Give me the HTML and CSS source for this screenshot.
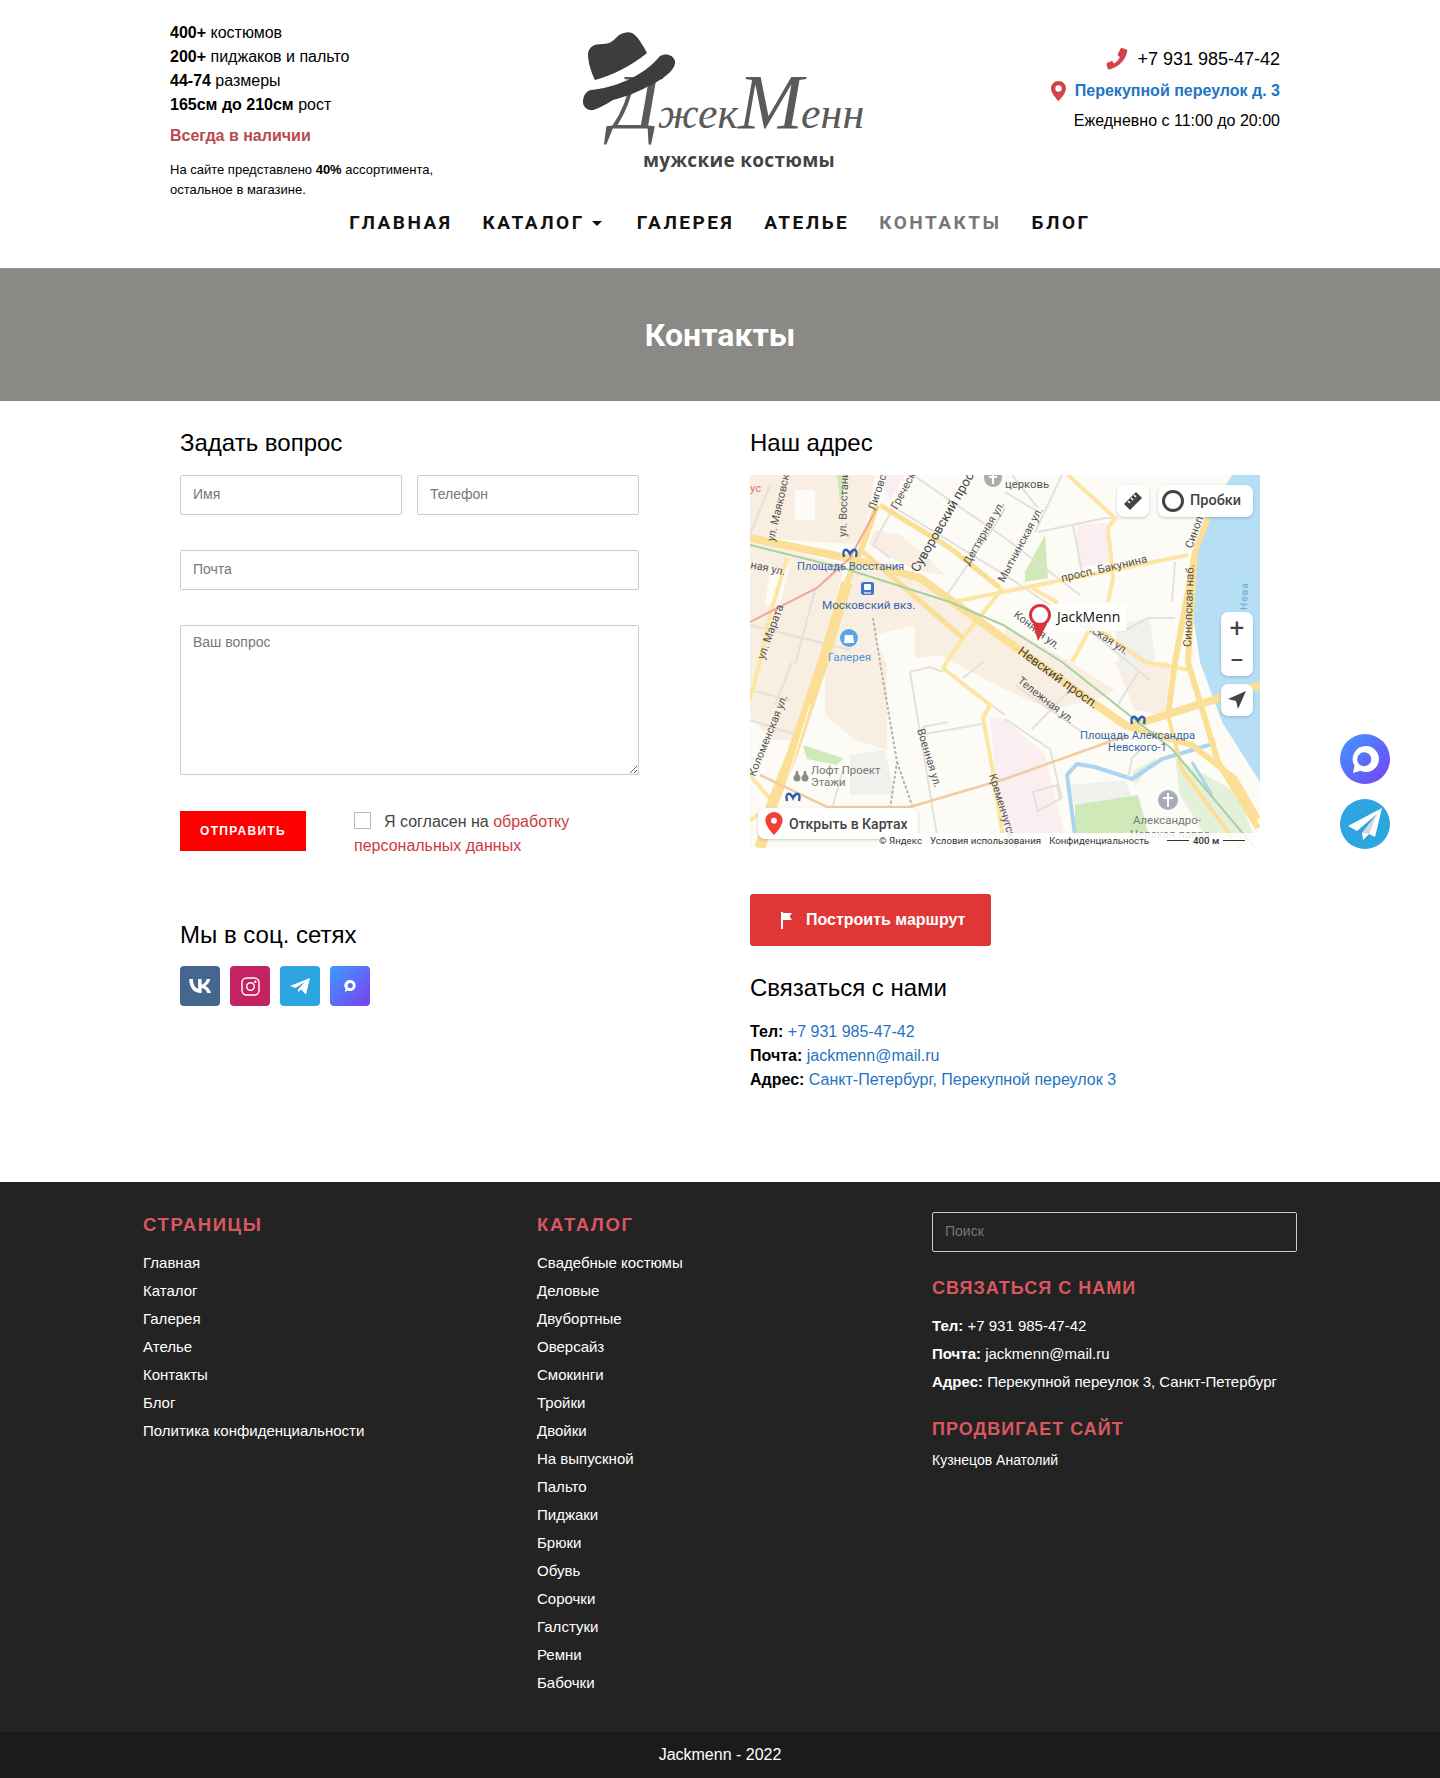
FILE: index.html
```html
<!DOCTYPE html>
<html lang="ru">
<head>
    <meta charset="UTF-8">
    <meta name="viewport" content="width=device-width, initial-scale=1.0">
    <title>Контакты - ДжекМенн</title>
    <link rel="stylesheet" href="styles.css">
</head>

<body>
    <header class="site-header">
        <div class="header-top">
            <div class="header-info">
                <p><b>400+</b> костюмов</p>
                <p><b>200+</b> пиджаков и пальто</p>
                <p><b>44-74</b> размеры</p>
                <p><b>165см до 210см</b> рост</p>
                <p class="in-stock">Всегда в наличии</p>
                <p class="info-small">На сайте представлено <b>40%</b> ассортимента,<br>остальное в магазине.</p>
            </div>

            <a class="logo" href="#">
                <svg class="logo-hat" viewBox="0 0 93 79" aria-hidden="true">
                    <path d="M5 22C6 15 10 12 20 12C26 12 30 9 33 6C37 1 44-1 49 1C55 4 60 14 64 21C48 34 30 43 12 48C8 40 5 30 5 22Z" fill="#3d3d3d"/>
                    <path d="M77 24C82 21 90 22 92 29C93 36 85 44 70 52C55 60 42 65 30 68C20 74 12 79 7 78C2 77 0 73 0 70C0 64 3 59 8 58C30 56 60 45 77 24Z" fill="#3d3d3d"/>
                </svg>
                <span class="logo-name"><span class="logo-cap">Д</span>жек<span class="logo-cap">М</span>енн</span>
                <span class="logo-sub">мужские костюмы</span>
            </a>

            <div class="header-contacts">
                <p class="contact-phone">
                    <svg class="icon-red" width="22" height="22" viewBox="0 0 22 22" aria-hidden="true"><path d="M16 0l4.500 1.500c.8.300 1 1 .8 1.800C19.500 12 13 19 3.500 21.500c-.8.200-1.500-.2-1.800-1L.5 16.500c-.2-.7 0-1.200.6-1.500l4-1.800c.6-.2 1.100-.1 1.500.4l1.500 1.900c2.500-1.500 4.500-3.700 5.800-6.300l-1.800-1.700c-.4-.4-.5-.9-.3-1.400L14.500.8c.3-.7.800-1 1.500-.8z"/></svg>
                    +7 931 985-47-42
                </p>
                <p class="contact-address">
                    <svg class="icon-red" width="15" height="20" viewBox="0 0 15 20" aria-hidden="true"><path fill-rule="evenodd" d="M7.500 0C3.400 0 0 3.300 0 7.400 0 11.500 5 17.500 7.500 20 10 17.500 15 11.500 15 7.400 15 3.300 11.600 0 7.500 0zm0 4.300a3.200 3.200 0 1 1 0 6.400 3.200 3.200 0 0 1 0-6.400z"/></svg>
                    <a href="#">Перекупной переулок д. 3</a>
                </p>
                <p class="contact-hours">Ежедневно с 11:00 до 20:00</p>
            </div>
        </div>

        <nav class="main-nav">
            <a href="#">Главная</a>
            <a href="#" class="has-caret">Каталог</a>
            <a href="#">Галерея</a>
            <a href="#">Ателье</a>
            <a href="#" class="active">Контакты</a>
            <a href="#">Блог</a>
        </nav>
    </header>

    <section class="page-title">
        <h1>Контакты</h1>
    </section>

    <main class="contacts">
        <div class="contacts-left">
            <h2>Задать вопрос</h2>
            <form class="ask-form">
                <div class="form-row">
                    <input type="text" placeholder="Имя">
                    <input type="text" placeholder="Телефон">
                </div>
                <input type="text" placeholder="Почта">
                <textarea placeholder="Ваш вопрос"></textarea>
                <div class="form-send">
                    <button type="button" class="send-btn">Отправить</button>
                    <label class="agree"><span class="agree-box"></span>Я согласен на <a href="#">обработку персональных данных</a></label>
                </div>
            </form>

            <h2 class="social-title">Мы в соц. сетях</h2>
            <div class="social">
                <a class="social-vk" href="#" aria-label="VK">
                    <svg width="22" height="14" viewBox="0 0 22 14"><path fill="#fff" d="M12 14C4.600 14 .4 8.800.2 0h3.700c.1 6.500 3 9.200 5.200 9.800V0h3.500v5.600c2.100-.2 4.400-2.800 5.100-5.600h3.500c-.6 3.500-3.100 6-4.900 7 1.800.8 4.700 3 5.800 7h-3.800c-.9-2.700-3-4.700-5.700-5V14z"/></svg>
                </a>
                <a class="social-ig" href="#" aria-label="Instagram">
                    <svg width="19" height="19" viewBox="0 0 20 20" fill="none" stroke="#fff" stroke-width="1.500"><rect x="1" y="1" width="18" height="18" rx="5"/><circle cx="10" cy="10" r="4"/><circle cx="15" cy="5" r=".6" fill="#fff"/></svg>
                </a>
                <a class="social-tg" href="#" aria-label="Telegram">
                    <svg width="20" height="17" viewBox="0 0 20 17"><path fill="#fff" d="M20 0L0 8l5.500 2L15 4l-7 7.500V14l3-2.500 5 5z"/></svg>
                </a>
                <a class="social-chat" href="#" aria-label="Чат">
                    <svg width="12" height="12" viewBox="0 0 12 12"><path fill="#fff" fill-rule="evenodd" d="M6.200 0a5.500 5.500 0 1 1-2.400 10.500L1 12l.6-3A5.500 5.500 0 0 1 6.200 0zm0 3a2.600 2.600 0 1 0 0 5.200 2.600 2.600 0 0 0 0-5.200z"/></svg>
                </a>
            </div>
        </div>

        <div class="contacts-right">
            <h2>Наш адрес</h2>
            <div class="map">
                <svg class="map-canvas" viewBox="0 0 510 373" aria-label="Карта">
                    <rect width="510" height="373" fill="#fcfbf6"/>
                    <!-- районы -->
                    <g fill="#f8eee2">
                        <path d="M0 0H125L112 70 0 62Z"/>
                        <path d="M118 70L165 95 195 100 175 80 150 60 125 55Z"/>
                        <path d="M0 65L95 90 45 265 20 265 0 240Z"/>
                        <path d="M100 90L170 105 255 165 340 225 300 235 250 212 190 180 137 187 137 275 105 265 75 240 75 187Z"/>
                        <path d="M255 150L320 187 365 215 345 225 255 165Z"/>
                        <path d="M365 187H420L415 240 385 235Z"/>
                    </g>
                    <g fill="#fcfbf6">
                        <path d="M45 15H65L65 45H45Z"/>
                        <path d="M125 160L165 150V187H135Z"/>
                        <path d="M20 95L40 90 30 130 15 130Z"/>
                    </g>
                    <g fill="#fbeef0">
                        <path d="M327 50L357 48 360 87 328 93Z"/>
                        <path d="M255 244L295 280 315 363 255 363 245 300 240 243Z"/>
                        <path d="M135 0H155L140 25 135 15Z"/>
                    </g>
                    <g fill="#f0f0ed">
                        <path d="M100 280L135 275 145 320 100 320Z"/>
                        <path d="M365 150L400 143 405 185 370 200Z"/>
                        <path d="M320 310L375 305 385 330 325 335Z"/>
                    </g>
                    <g fill="#cfe9b9">
                        <path d="M295 60L275 97V107L298 103Z"/>
                        <path d="M87 0H98L90 27Z"/>
                        <path d="M53 270L93 283 87 290 57 284Z"/>
                        <path d="M325 330L388 320 398 357 325 360Z"/>
                    </g>
                    <g fill="#e3f1d8">
                        <path d="M382 297L408 282 385 310Z"/>
                        <path d="M425 283L488 318 505 365 455 360 430 320Z"/>
                    </g>
                    <!-- вода -->
                    <path d="M482 0L455 43 445 83 442 133 450 187 472 247 510 307V0Z" fill="#b6def5"/>
                    <g fill="none" stroke="#a9d5f2">
                        <path d="M462 269L412 284 382 304 345 292 327 289 317 300 325 360" stroke-width="4"/>
                        <path d="M442 287L462 320" stroke-width="3"/>
                    </g>
                    <!-- мелкие улицы -->
                    <g fill="none" stroke="#e2e1dc" stroke-width="2">
                        <path d="M163 0L255 63 330 120"/>
                        <path d="M145 33L255 100 345 160 400 205"/>
                        <path d="M197 120L247 47 255 33"/>
                        <path d="M123 70L143 33"/>
                        <path d="M123 70L140 83"/>
                        <path d="M288 57L355 43H368"/>
                        <path d="M285 57L312 0"/>
                        <path d="M323 50L332 97"/>
                        <path d="M255 17L288 37"/>
                        <path d="M262 0L288 33"/>
                        <path d="M425 87L422 127"/>
                        <path d="M372 157L398 143H425"/>
                        <path d="M160 197L180 192 193 197"/>
                        <path d="M160 197L187 360"/>
                        <path d="M173 252L198 247"/>
                        <path d="M175 259L232 249"/>
                        <path d="M0 245L43 259"/>
                        <path d="M42 187L25 230"/>
                        <path d="M213 203L233 187"/>
                        <path d="M240 229L255 240"/>
                        <path d="M83 330L93 295"/>
                        <path d="M255 244L300 274 312 324"/>
                        <path d="M283 317L307 310 310 324 288 336Z"/>
                        <path d="M265 210L332 257"/>
                        <path d="M282 254L325 210"/>
                        <path d="M368 230L388 197"/>
                        <path d="M378 303L382 283 392 273"/>
                        <path d="M0 150L60 165 100 175"/>
                        <path d="M65 115L45 190"/>
                        <path d="M20 10L0 60"/>
                        <path d="M0 215L40 225"/>
                    </g>
                    <g fill="none" stroke="#b3b3af" stroke-width="2" stroke-dasharray="3 2">
                        <path d="M123 143L130 187 147 287 140 333"/>
                        <path d="M147 287L163 333"/>
                    </g>
                    <!-- дороги -->
                    <g fill="none" stroke="#fde6a3" stroke-width="4" stroke-linejoin="round">
                        <path d="M203 127L438 80"/>
                        <path d="M253 113L213 163 193 193 240 230 233 243 243 297 253 363"/>
                        <path d="M282 113L308 128"/>
                        <path d="M338 147L395 187 440 195"/>
                        <path d="M318 0L365 43 358 53 363 103 358 127"/>
                        <path d="M342 150L322 187"/>
                        <path d="M37 83L20 140 10 187 0 225"/>
                        <path d="M0 300L25 330 0 345"/>
                    </g>
                    <g fill="none" stroke="#fcdf97" stroke-linejoin="round">
                        <path d="M0 63L97 83 170 103 253 163 342 227 378 252" stroke-width="8"/>
                        <path d="M130 30L200 73 250 113" stroke-width="5"/>
                        <path d="M113 77L213 163" stroke-width="5"/>
                        <path d="M127 30L113 70 97 107" stroke-width="6"/>
                        <path d="M97 107L73 187 43 277 23 327 10 373" stroke-width="11"/>
                        <path d="M458 43L445 77 425 187 418 240" stroke-width="6"/>
                        <path d="M445 77L438 187 468 287 508 353" stroke-width="6"/>
                        <path d="M378 252L510 210" stroke-width="8"/>
                        <path d="M378 252L442 270 485 304 508 344" stroke-width="6"/>
                        <path d="M418 240L432 295 490 373" stroke-width="4"/>
                    </g>
                    <path d="M60 230L30 330" fill="none" stroke="#fff" stroke-width="1"/>
                    <path d="M0 70L93 93 200 127 253 150 312 187 422 274 505 373" fill="none" stroke="#a8d0a0" stroke-width="2"/>
                    <path d="M0 147L67 113 100 83 127 33" fill="none" stroke="#f0a995" stroke-width="2"/>
                    <path d="M10 300L77 332 160 332 255 304 378 260" fill="none" stroke="#f3cba0" stroke-width="2.500"/>
                    <!-- подписи -->
                    <g class="map-street">
                        <text transform="translate(24 67) rotate(-77)">ул. Маяковского</text>
                        <text transform="translate(96 62) rotate(-88)">ул. Восстания</text>
                        <text transform="translate(125 36) rotate(-72)">Лиговский</text>
                        <text transform="translate(147 35) rotate(-62)">Греческий</text>
                        <text transform="translate(168 98) rotate(-60)" class="map-street-lg">Суворовский просп.</text>
                        <text transform="translate(219 91) rotate(-60)">Дегтярная ул.</text>
                        <text transform="translate(254 108) rotate(-62)">Мытнинская ул.</text>
                        <text transform="translate(312 107) rotate(-13)" class="map-street-md">просп. Бакунина</text>
                        <text transform="translate(441 172) rotate(-88)" class="map-street-md">Синопская наб.</text>
                        <text transform="translate(442 74) rotate(-70)" class="map-street-md">Синоп</text>
                        <text transform="translate(14 185) rotate(-70)" class="map-street-md">ул. Марата</text>
                        <text transform="translate(5 302) rotate(-68)">Коломенская ул.</text>
                        <text transform="translate(263 141) rotate(38)">Конная ул.</text>
                        <text transform="translate(325 147) rotate(33)">Конская ул.</text>
                        <text transform="translate(267 178) rotate(36)" class="map-street-lg">Невский просп.</text>
                        <text transform="translate(267 207) rotate(38)">Тележная ул.</text>
                        <text transform="translate(167 255) rotate(73)">Военная ул.</text>
                        <text transform="translate(239 300) rotate(73)">Кременчугская</text>
                        <text transform="translate(0 93) rotate(12)">ная ул.</text>
                        <text x="255" y="13" class="map-street-md">церковь</text>
                        <text transform="translate(497 135) rotate(-88)" class="map-river">Нева</text>
                    </g>
                    <text x="0" y="17" class="map-cut">ус</text>
                    <g class="map-metro">
                        <text x="47" y="95">Площадь Восстания</text>
                        <text x="72" y="134" class="map-metro-lg">Московский вкз.</text>
                        <text x="330" y="264">Площадь Александра</text>
                        <text x="358" y="276">Невского-1</text>
                    </g>
                    <g fill="none" stroke="#2a5fb0" stroke-width="2.400">
                        <path d="M94 82C92 73 97 73 100 79C103 73 108 73 106 82"/>
                        <path d="M382 249C380 240 385 240 388 246C391 240 396 240 394 249"/>
                        <path d="M37 326C35 317 40 317 43 323C46 317 51 317 49 326"/>
                    </g>
                    <rect x="111" y="107" width="13" height="13" rx="2.500" fill="#3b76cc"/>
                    <rect x="114" y="109" width="7" height="6" rx="1" fill="#fff"/>
                    <path d="M114 118h7" stroke="#fff" stroke-width="1.200"/>
                    <circle cx="99" cy="163" r="9" fill="#5aa5ea"/>
                    <path d="M95 160H103L104 168H94Z" fill="#fff"/>
                    <text x="78" y="186" class="map-shop">Галерея</text>
                    <circle cx="243" cy="3" r="9" fill="#a9acb2"/>
                    <path d="M243 -3v12M239 2h8" stroke="#fff" stroke-width="2"/>
                    <circle cx="418" cy="325" r="10" fill="#a9acb2"/>
                    <path d="M418 318v14M413 323h10" stroke="#fff" stroke-width="2"/>
                    <text x="383" y="349" class="map-place">Александро-</text>
                    <text x="380" y="363" class="map-place">Невская лавра</text>
                    <g fill="#8a8a8a">
                        <circle cx="47" cy="303" r="3.500"/>
                        <circle cx="55" cy="303" r="3.500"/>
                        <path d="M46 296h2l1 6h-4zM54 296h2l1 6h-4z"/>
                    </g>
                    <text x="61" y="299" class="map-place">Лофт Проект</text>
                    <text x="61" y="311" class="map-place">Этажи</text>
                    <!-- метка -->
                    <rect x="298" y="130" width="78" height="26" fill="#fff" opacity=".9"/>
                    <circle cx="290" cy="140" r="9.500" fill="#fff" stroke="#d8343b" stroke-width="3"/>
                    <path d="M283 149H297L288 166Z" fill="#d8343b"/>
                    <text x="307" y="147" class="map-pin-label">JackMenn</text>
                </svg>

                <div class="map-ruler"><svg width="22" height="22" viewBox="0 0 22 22"><path d="M2 14L14 2l6 6L8 20Z" fill="#444"/><path d="M6 11l2 2M9 8l2 2M12 5l2 2" stroke="#fff" stroke-width="1.500"/></svg></div>
                <div class="map-traffic"><span class="traffic-ring"></span>Пробки</div>
                <div class="map-zoom"><span>+</span><span>−</span></div>
                <div class="map-locate"><svg width="20" height="20" viewBox="0 0 20 20"><path d="M19 1L1 9l8 2 2 8Z" fill="#444"/></svg></div>
                <div class="map-open">
                    <svg width="18" height="23" viewBox="0 0 15 20"><path fill-rule="evenodd" fill="#f43f37" d="M7.500 0C3.400 0 0 3.300 0 7.400 0 11.500 5 17.500 7.500 20 10 17.500 15 11.500 15 7.400 15 3.300 11.600 0 7.500 0zm0 5a2.500 2.500 0 1 1 0 5 2.500 2.500 0 0 1 0-5z"/></svg>
                    Открыть в Картах
                </div>
                <div class="map-copy"><span>© Яндекс</span><span>Условия использования</span><span>Конфиденциальность</span><span class="map-scale">400 м</span></div>
            </div>

            <a class="route-btn" href="#">
                <svg width="13" height="17" viewBox="0 0 13 17"><path fill="#fff" d="M1 0h2v17H1zM3 1h9L9.500 4.500 12 8H3z"/></svg>
                Построить маршрут
            </a>

            <h2 class="contact-title">Связаться с нами</h2>
            <ul class="contact-list">
                <li><b>Тел:</b> <a href="#">+7 931 985-47-42</a></li>
                <li><b>Почта:</b> <a href="#">jackmenn@mail.ru</a></li>
                <li><b>Адрес:</b> <a href="#">Санкт-Петербург, Перекупной переулок 3</a></li>
            </ul>
        </div>
    </main>

    <aside class="float-buttons">
        <a class="float-chat" href="#" aria-label="Чат">
            <svg width="30" height="30" viewBox="0 0 30 30"><path fill="#fff" fill-rule="evenodd" d="M16 2a13 13 0 1 1-5.500 24.800L3 29l1.500-7.500A13 13 0 0 1 16 2zm0 6.500a7 7 0 1 0 0 13.500 7 7 0 0 0 0-13.500z"/></svg>
        </a>
        <a class="float-tg" href="#" aria-label="Telegram">
            <svg width="34" height="32" viewBox="0 0 34 32"><path fill="#fff" d="M34 0L0 18l9 5L29 6 14 25l1 7 6-6 6 3z"/><path fill="#d8d8d8" d="M29 6L14 25l7 1z"/></svg>
        </a>
    </aside>

    <footer class="site-footer">
        <div class="footer-columns">
            <div class="footer-col">
                <h3>Страницы</h3>
                <ul>
                    <li><a href="#">Главная</a></li>
                    <li><a href="#">Каталог</a></li>
                    <li><a href="#">Галерея</a></li>
                    <li><a href="#">Ателье</a></li>
                    <li><a href="#">Контакты</a></li>
                    <li><a href="#">Блог</a></li>
                    <li><a href="#">Политика конфиденциальности</a></li>
                </ul>
            </div>
            <div class="footer-col">
                <h3>Каталог</h3>
                <ul>
                    <li><a href="#">Свадебные костюмы</a></li>
                    <li><a href="#">Деловые</a></li>
                    <li><a href="#">Двубортные</a></li>
                    <li><a href="#">Оверсайз</a></li>
                    <li><a href="#">Смокинги</a></li>
                    <li><a href="#">Тройки</a></li>
                    <li><a href="#">Двойки</a></li>
                    <li><a href="#">На выпускной</a></li>
                    <li><a href="#">Пальто</a></li>
                    <li><a href="#">Пиджаки</a></li>
                    <li><a href="#">Брюки</a></li>
                    <li><a href="#">Обувь</a></li>
                    <li><a href="#">Сорочки</a></li>
                    <li><a href="#">Галстуки</a></li>
                    <li><a href="#">Ремни</a></li>
                    <li><a href="#">Бабочки</a></li>
                </ul>
            </div>
            <div class="footer-col footer-col-last">
                <input class="footer-search" type="text" placeholder="Поиск">
                <h3>Связаться с нами</h3>
                <ul>
                    <li><b>Тел:</b> +7 931 985-47-42</li>
                    <li><b>Почта:</b> jackmenn@mail.ru</li>
                    <li><b>Адрес:</b> Перекупной переулок 3, Санкт-Петербург</li>
                </ul>
                <h3 class="promo-title">Продвигает сайт</h3>
                <p class="promo-name">Кузнецов Анатолий</p>
            </div>
        </div>
        <div class="footer-bottom">Jackmenn - 2022</div>
    </footer>
</body>
</html>
```

FILE: styles.css
```css
* {
    box-sizing: border-box;
}

body {
    margin: 0;
    font-family: "Liberation Sans", Arial, sans-serif;
    font-size: 16px;
    line-height: 24px;
    color: #000;
    background-color: #fff;
}

a {
    text-decoration: none;
    color: #1f74c4;
}

p {
    margin: 0;
}

h2 {
    margin: 0;
    font-size: 24px;
    line-height: 36px;
    font-weight: 400;
}

/* Header */
.site-header {
    height: 269px;
    border-bottom: 1px solid #999;
}

.header-top {
    width: 1110px;
    margin-left: 170px;
    height: 211px;
    display: flex;
    justify-content: space-between;
}

.header-info {
    width: 290px;
    padding-top: 21px;
}

.in-stock {
    margin-top: 7px;
    font-weight: bold;
    color: #b94a4e;
}

.info-small {
    margin-top: 12px;
    font-size: 13px;
    line-height: 20px;
}

.logo {
    position: relative;
    width: 290px;
    height: 150px;
    margin-top: 32px;
    margin-left: 16px;
    color: #444;
    display: block;
}

.logo-hat {
    position: absolute;
    left: 0;
    top: 0;
    width: 93px;
    height: 79px;
    z-index: 1;
}

.logo-name {
    position: absolute;
    left: 27px;
    top: 26px;
    color: #5a5a5a;
    font-family: "Liberation Serif", serif;
    font-style: italic;
    font-size: 44px;
    line-height: 88px;
    white-space: nowrap;
}

.logo-cap {
    font-size: 78px;
    letter-spacing: -2px;
}

.logo-sub {
    position: absolute;
    left: 60px;
    top: 116px;
    font-family: "Open Sans", sans-serif;
    font-weight: 700;
    font-size: 19px;
    line-height: 24px;
    letter-spacing: .3px;
    white-space: nowrap;
}

.header-contacts {
    width: 300px;
    padding-top: 44px;
    text-align: right;
}

.header-contacts p {
    display: flex;
    justify-content: flex-end;
    align-items: center;
}

.icon-red {
    fill: #d2444a;
}

.contact-phone {
    font-size: 18px;
    line-height: 30px;
    gap: 9px;
}

.contact-address {
    margin-top: 2px;
    font-weight: bold;
    line-height: 30px;
    gap: 9px;
}

.contact-hours {
    line-height: 30px;
}

.main-nav {
    display: flex;
    justify-content: center;
    gap: 30px;
    font-family: Roboto, sans-serif;
    font-weight: 700;
    font-size: 19px;
    line-height: 24px;
    letter-spacing: 2.500px;
    text-transform: uppercase;
}

.main-nav a {
    color: #111;
}

.main-nav a.active {
    color: #777;
}

.has-caret::after {
    content: "";
    display: inline-block;
    margin-left: 7px;
    margin-right: 5px;
    vertical-align: 3px;
    border-top: 5px solid #111;
    border-left: 5px solid transparent;
    border-right: 5px solid transparent;
}

/* Title band */
.page-title {
    height: 132px;
    background-color: #8a8985;
    display: flex;
    align-items: center;
    justify-content: center;
}

.page-title h1 {
    margin: 0;
    color: #fff;
    font-family: Roboto, sans-serif;
    font-size: 32px;
    font-weight: 700;
}

/* Contacts */
.contacts {
    width: 1080px;
    height: 781px;
    margin: 0 auto;
    padding-top: 24px;
    display: grid;
    grid-template-columns: 459px 510px;
    justify-content: space-between;
    align-items: start;
}

.ask-form {
    margin-top: 14px;
    display: flex;
    flex-direction: column;
    gap: 35px;
}

.form-row {
    display: flex;
    gap: 15px;
}

.ask-form input,
.ask-form textarea {
    width: 100%;
    height: 40px;
    padding: 0 12px 2px;
    border: 1px solid #ccc;
    border-radius: 2px;
    font-family: inherit;
    font-size: 14px;
    outline: none;
}

.ask-form textarea {
    height: 150px;
    padding-top: 8px;
}

::placeholder {
    color: #777;
    opacity: 1;
}

.form-send {
    display: flex;
    margin-top: 1px;
}

.send-btn {
    width: 126px;
    height: 40px;
    flex: none;
    margin-right: 48px;
    border: none;
    background-color: #f00;
    color: #fff;
    font-family: inherit;
    font-size: 12px;
    font-weight: bold;
    letter-spacing: 1.300px;
    text-transform: uppercase;
}

.agree {
    margin-top: -1px;
    font-size: 16px;
    line-height: 24px;
    color: #444;
}

.agree a {
    color: #cf3a40;
}

.agree-box {
    display: inline-block;
    width: 17px;
    height: 17px;
    margin-right: 13px;
    vertical-align: -2px;
    border: 1px solid #bbb;
}

.social-title {
    margin-top: 59px;
}

.social {
    margin-top: 13px;
    display: flex;
    gap: 10px;
}

.social a {
    width: 40px;
    height: 40px;
    border-radius: 4px;
    display: flex;
    align-items: center;
    justify-content: center;
}

.social-vk {
    background-color: #45668e;
}

.social-ig {
    background-color: #c32361;
}

.social-tg {
    background-color: #2ca5e0;
}

.social-chat {
    background: linear-gradient(135deg, #3d9bff, #7a3ff2);
}

/* Map */
.map {
    position: relative;
    width: 510px;
    height: 373px;
    margin-top: 14px;
    overflow: hidden;
    font-family: Roboto, sans-serif;
}

.map-canvas {
    display: block;
    font-family: Roboto, sans-serif;
}

.map-street text {
    font-size: 11px;
    fill: #555;
}

.map-street .map-street-md {
    font-size: 11.300px;
}

.map-street .map-street-lg {
    font-size: 13px;
    fill: #444;
}

.map-street .map-river {
    font-size: 10px;
    letter-spacing: 1px;
    fill: #6fa8cc;
}

.map-cut {
    font-size: 11px;
    fill: #d77;
}

.map-metro text {
    font-size: 11.200px;
    fill: #3a64a8;
}

.map-metro .map-metro-lg {
    font-size: 11.700px;
}

.map-shop {
    font-size: 11.500px;
    fill: #4a94dd;
}

.map-place {
    font-size: 11.400px;
    fill: #777;
}

.map-pin-label {
    font-family: "Open Sans", sans-serif;
    font-size: 14px;
    fill: #111;
}

.map-ruler,
.map-traffic,
.map-zoom,
.map-locate,
.map-open {
    position: absolute;
    background-color: #fff;
    border-radius: 7px;
    box-shadow: 0 1px 3px rgba(0, 0, 0, .2);
    color: #444;
}

.map-ruler {
    left: 367px;
    top: 10px;
    width: 32px;
    height: 32px;
    display: flex;
    align-items: center;
    justify-content: center;
}

.map-traffic {
    left: 408px;
    top: 10px;
    width: 95px;
    height: 32px;
    padding-left: 4px;
    display: flex;
    align-items: center;
    gap: 6px;
    font-size: 14.500px;
    font-weight: 500;
}

.traffic-ring {
    width: 22px;
    height: 22px;
    border: 3px solid #444;
    border-radius: 50%;
}

.map-zoom {
    left: 471px;
    top: 137px;
    width: 32px;
    height: 64px;
    display: flex;
    flex-direction: column;
    text-align: center;
    font-size: 26px;
    line-height: 32px;
}

.map-locate {
    left: 471px;
    top: 209px;
    width: 32px;
    height: 32px;
    display: flex;
    align-items: center;
    justify-content: center;
}

.map-open {
    left: 8px;
    bottom: 9px;
    width: 160px;
    height: 31px;
    padding-left: 7px;
    display: flex;
    align-items: center;
    gap: 6px;
    font-size: 14px;
    font-weight: 500;
}

.map-copy {
    position: absolute;
    right: 0;
    bottom: 0;
    width: 382px;
    height: 15px;
    padding-left: 1px;
    display: flex;
    gap: 8px;
    background-color: rgba(255, 255, 255, .85);
    font-size: 9.700px;
    line-height: 15px;
    color: #333;
    white-space: nowrap;
}

.map-scale {
    margin-left: 10px;
    display: flex;
    align-items: center;
    gap: 4px;
    font-weight: 500;
}

.map-scale::before,
.map-scale::after {
    content: "";
    width: 22px;
    height: 1px;
    background-color: #333;
}

.route-btn {
    width: 241px;
    height: 52px;
    margin-top: 46px;
    padding-left: 30px;
    border-radius: 3px;
    background-color: #e03636;
    color: #fff;
    font-weight: bold;
    display: flex;
    align-items: center;
    gap: 13px;
}

.contact-title {
    margin-top: 24px;
}

.contact-list {
    list-style: none;
    margin: 14px 0 0;
    padding: 0;
}

/* Floating buttons */
.float-buttons {
    position: absolute;
    left: 1340px;
    top: 734px;
    display: flex;
    flex-direction: column;
    gap: 15px;
}

.float-buttons a {
    width: 50px;
    height: 50px;
    border-radius: 50%;
    display: flex;
    align-items: center;
    justify-content: center;
}

.float-chat {
    background: linear-gradient(135deg, #3d9bff, #7a3ff2);
}

.float-tg {
    background-color: #2ca5e0;
}

/* Footer */
.site-footer {
    background-color: #232323;
    color: #fff;
}

.footer-columns {
    height: 550px;
    padding: 30px 0 0 143px;
    display: grid;
    grid-template-columns: 394px 395px 365px;
    font-size: 15px;
    line-height: 28px;
}

.site-footer h3 {
    margin: 1px 0 12px;
    font-size: 18.500px;
    line-height: 24px;
    font-weight: bold;
    letter-spacing: 1.600px;
    text-transform: uppercase;
    color: #d9575f;
}

.footer-col-last h3 {
    margin: 0 0 12px;
    font-size: 18px;
    letter-spacing: 1px;
}

.site-footer ul {
    list-style: none;
    margin: 0;
    padding: 0;
}

.site-footer li a {
    color: #fff;
}

.footer-search {
    display: block;
    width: 365px;
    height: 40px;
    margin-bottom: 24px;
    padding: 0 12px 2px;
    background-color: transparent;
    border: 1px solid #ccc;
    border-radius: 2px;
    font-family: inherit;
    font-size: 14px;
    outline: none;
}

.footer-col-last .promo-title {
    margin: 21px 0 5px;
}

.promo-name {
    font-size: 14px;
}

.footer-bottom {
    height: 46px;
    background-color: #1b1b1b;
    text-align: center;
    font-size: 16px;
    line-height: 46px;
}
```
